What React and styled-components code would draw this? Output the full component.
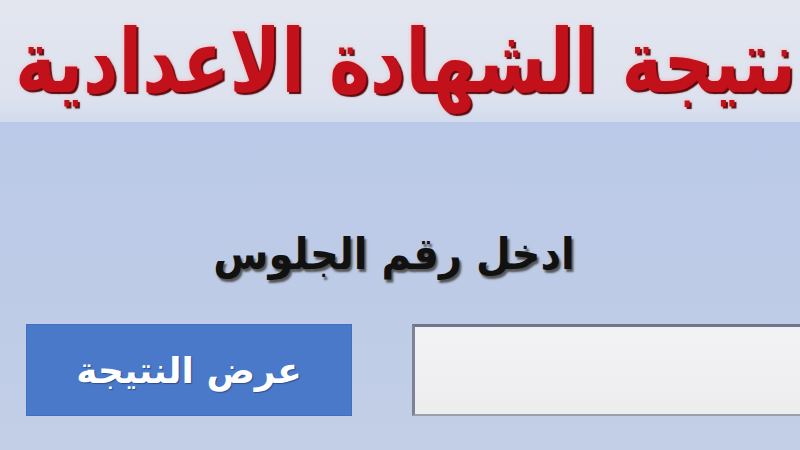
import styled, { createGlobalStyle } from 'styled-components'

const GlobalStyle = createGlobalStyle`
  html, body {
    margin: 0;
    padding: 0;
    width: 800px;
    height: 450px;
    overflow: hidden;
    background: #bccbe8;
  }
`;

const Page = styled.div`
  direction: rtl;
  width: 800px;
  height: 450px;
  display: flex;
  flex-direction: column;
  font-family: "DejaVu Sans", sans-serif;
  background: linear-gradient(180deg, #b9c8e8 0%, #bdcbe7 60%, #c3cfe6 100%);
  overflow: hidden;
`;

const Header = styled.div`
  height: 122px;
  display: flex;
  align-items: center;
  justify-content: flex-start;
  padding-right: 4px;
  background: linear-gradient(180deg, #e3e6ef 0%, #dde2ee 80%, #d2dbed 100%);
  overflow: hidden;
`;

const Title = styled.h1`
  margin: 0;
  white-space: nowrap;
  font-family: "DejaVu Sans Condensed", "DejaVu Sans", sans-serif;
  font-size: 77px;
  font-weight: bold;
  color: #c2111b;
  transform: scaleY(1.14);
  transform-origin: center;
  text-shadow: 2px 2px 1px #5a0a0e, 0 0 4px #ffb3b3;
`;

const Main = styled.div`
  flex: 1;
  display: flex;
  flex-direction: column;
  align-items: center;
  padding-top: 112px;
`;

const Label = styled.div`
  font-size: 40px;
  font-weight: bold;
  color: #111;
  text-shadow: 2px 2px 2px #555;
  line-height: 1;
  margin-right: 12px;
  transform: scaleY(1.1);
`;

const Row = styled.div`
  align-self: stretch;
  display: flex;
  gap: 60px;
  margin-top: 50px;
  margin-right: -2px;
`;

const Input = styled.input`
  width: 390px;
  height: 92px;
  box-sizing: border-box;
  border: 2px solid #9aa0ae;
  border-top: 3px solid #70778a;
  border-left: 3px solid #7c8395;
  background: linear-gradient(180deg, #f2f1f4 0%, #eeedee 100%);
  outline: none;
`;

const Button = styled.button`
  width: 326px;
  height: 92px;
  border: 1px solid #4270c0;
  background: #4a79c9;
  color: #fff;
  font-family: "DejaVu Sans", sans-serif;
  font-size: 36px;
  font-weight: bold;
  text-shadow: 1px 1px 1px #2c4f8f;
  cursor: pointer;
`;

export default function App() {
  return (
    <>
      <GlobalStyle />
      <Page>
        <Header>
          <Title>نتيجة الشهادة الاعدادية</Title>
        </Header>
        <Main>
          <Label>ادخل رقم الجلوس</Label>
          <Row>
            <Input type="text" />
            <Button>عرض النتيجة</Button>
          </Row>
        </Main>
      </Page>
    </>
  );
}
